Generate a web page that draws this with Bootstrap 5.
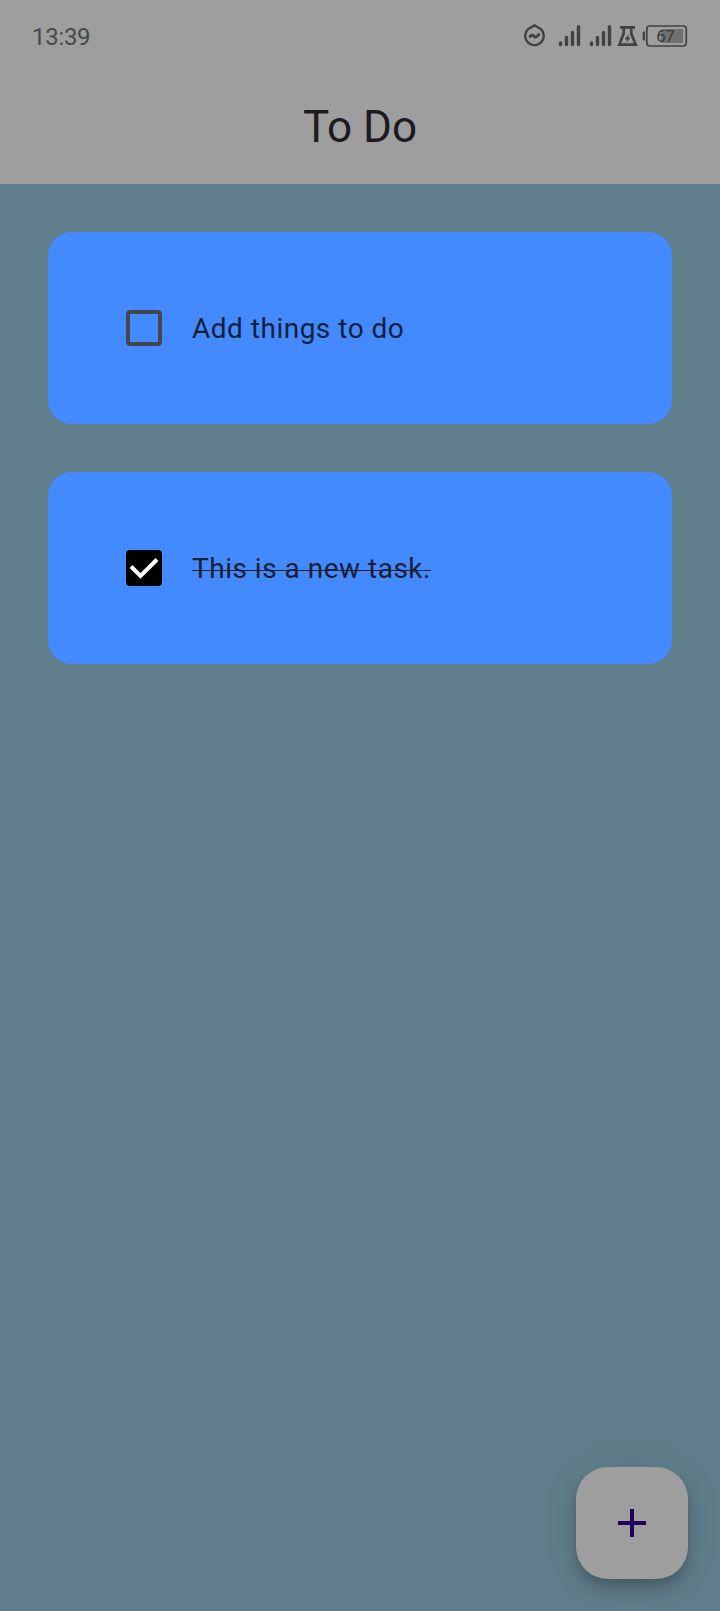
<!DOCTYPE html>
<html lang="en">
<head>
<meta charset="utf-8">
<meta name="viewport" content="width=device-width, initial-scale=1">
<title>To Do</title>
<link href="https://cdn.jsdelivr.net/npm/bootstrap@5.3.0/dist/css/bootstrap.min.css" rel="stylesheet">
<style>
  body { background: #607d8b; font-family: Roboto, "Liberation Sans", sans-serif; color: #1d1b20; }
  .app-header { background: #9e9e9e; height: 184px; }
  .status-bar { height: 72px; padding: 0 32px; color: #484848; }
  .clock { font-size: 24px; line-height: 28px; margin-top: 2px; letter-spacing: -.3px; }
  .app-title { font-size: 44px; line-height: 56px; height: 110px; font-weight: 400; }
  .task-list { padding: 48px; gap: 48px; }
  .task { height: 192px; border-radius: 24px; background: #448aff; padding: 0 78px; --bs-card-border-width: 0; }
  .task-box { width: 36px; height: 36px; border-radius: 4px; border: 4px solid #49454f; }
  .task-box.done { background: #000; border: 0; }
  .task-text { font-size: 28px; line-height: 40px; letter-spacing: .5px; margin: 2px 0 0 30px; color: #0f1f3c; }
  .task-text.done { color: #1a2034; background: linear-gradient(#1a2034, #1a2034) 0 21px / 100% 1px no-repeat; }
  .fab { width: 112px; height: 112px; right: 32px; bottom: 32px; border-radius: 32px; background: #9e9e9e;
    box-shadow: 0 6px 10px rgba(0,0,0,.12), 0 12px 20px rgba(0,0,0,.14), 0 2px 36px rgba(0,0,0,.08); }
  svg { display: block; flex: none; }
</style>
</head>
<body class="min-vh-100">
<header class="app-header">
  <div class="status-bar d-flex align-items-center justify-content-between">
    <span class="clock">13:39</span>
    <div class="d-flex align-items-center">
      <svg width="34" height="26" viewBox="523 23 34 26" fill="none" stroke="#424242">
        <path d="M531 27.4 534.5 25.2 538 27.4A9.2 9.2 0 1 1 531 27.4Z" stroke-width="2.4" stroke-linejoin="round"/>
        <path d="M529.3 37.4 530.8 35.6 533 35.3 535 37.2 537 36.4 539.6 33.8" stroke-width="2.8"/>
      </svg>
      <svg width="31" height="26" viewBox="557 23 31 26" stroke="#424242" stroke-width="3.4" stroke-linecap="round">
        <path d="M560.5 43v1.5M566.5 37.5v7M572.5 32.5v12M578.5 26.7v17.8"/>
      </svg>
      <svg width="29" height="26" viewBox="588 23 29 26" stroke="#424242" stroke-width="3.4" stroke-linecap="round">
        <path d="M591.5 43v1.5M597.5 37.5v7M603.5 32.5v12M609.5 26.7v17.8"/>
      </svg>
      <svg width="25" height="26" viewBox="617 23 25 26">
        <path d="M620 27.3h15M623.7 28v5.5L619.3 44.7h16.4L631.3 33.5V28" fill="none" stroke="#424242" stroke-width="2.7"/>
        <path d="M628.7 34 624.8 39.4h2.2L626.4 43l4-5.4H628.2Z" fill="#424242"/>
      </svg>
      <svg width="46" height="26" viewBox="642 23 46 26">
        <path d="M645 31.4h-.6q-1.7 0-1.7 1.8v5.5q0 1.8 1.7 1.8h.6Z" fill="#424242"/>
        <rect x="646.8" y="26" width="39.5" height="20" rx="3.2" fill="none" stroke="#424242" stroke-width="1.7"/>
        <rect x="661" y="29" width="22" height="14" fill="#707070"/>
        <text x="665.3" y="42" font-family="Roboto, sans-serif" font-size="17" letter-spacing="-.4" text-anchor="middle" fill="#383838">67</text>
      </svg>
    </div>
  </div>
  <h1 class="app-title d-flex align-items-center justify-content-center m-0">To Do</h1>
</header>
<main class="task-list d-flex flex-column">
  <div class="card task flex-row align-items-center">
    <span class="task-box"></span>
    <span class="task-text">Add things to do</span>
  </div>
  <div class="card task flex-row align-items-center">
    <span class="task-box done">
      <svg width="36" height="36" viewBox="0 0 36 36"><path d="M5 16.5 14.5 26 31 9.5" fill="none" stroke="#fff" stroke-width="4"/></svg>
    </span>
    <span class="task-text done">This is a new task.</span>
  </div>
</main>
<button class="fab border-0 p-0 position-fixed d-flex align-items-center justify-content-center" type="button" aria-label="Add task">
  <svg width="28" height="28" viewBox="0 0 28 28" fill="#21005d"><path d="M12 0h4v12h12v4H16v12h-4V16H0v-4h12Z"/></svg>
</button>
<script src="https://cdn.jsdelivr.net/npm/bootstrap@5.3.0/dist/js/bootstrap.bundle.min.js"></script>
</body>
</html>
